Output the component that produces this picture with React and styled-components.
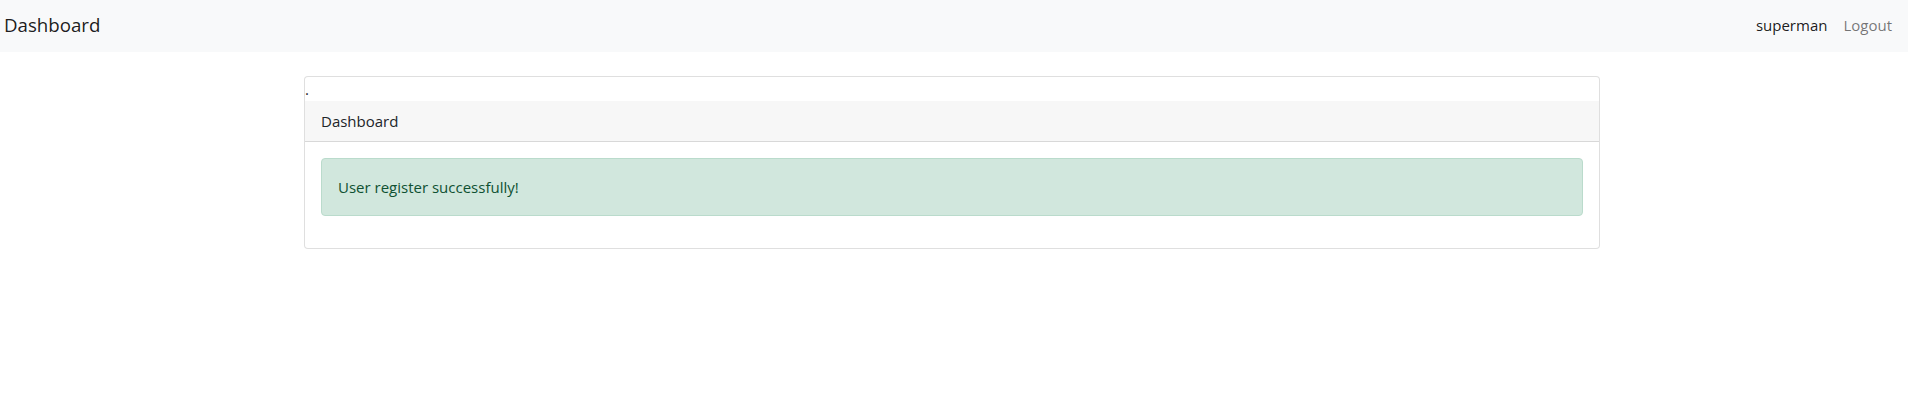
import React from 'react'
import styled, { createGlobalStyle } from 'styled-components'

const GlobalStyle = createGlobalStyle`
    body {
        margin: 0;
        font-family: "Open Sans", "Noto Sans", sans-serif;
        font-size: 15px;
        line-height: 24px;
        color: #212529;
        background: #fff;
    }
`

const Navbar = styled.nav`
    height: 52px;
    box-sizing: border-box;
    background: #f8f9fa;
    display: flex;
    align-items: center;
    justify-content: space-between;
    padding: 0 8px 2px 4px;
`
const Brand = styled.a`
    font-size: 18.7px;
    line-height: 30px;
    color: rgba(0, 0, 0, 0.9);
    text-decoration: none;
`
const NavLinks = styled.div`
    display: flex;
`
const NavLink = styled.a`
    padding: 0 8px;
    line-height: 24px;
    text-decoration: none;
    color: ${p => (p.$active ? 'rgba(0, 0, 0, 0.9)' : 'rgba(0, 0, 0, 0.55)')};
`
const Container = styled.div`
    max-width: 1296px;
    margin: 24px auto 0;
    position: relative;
    left: -2px;
`
const Card = styled.div`
    border: 1px solid rgba(0, 0, 0, 0.125);
    border-radius: 4px;
    background: #fff;
`
const Dot = styled.div`
    line-height: 24px;
`
const CardHeader = styled.div`
    padding: 8px 16px;
    background: rgba(0, 0, 0, 0.03);
    border-bottom: 1px solid rgba(0, 0, 0, 0.125);
`
const CardBody = styled.div`
    padding: 16px;
`
const Alert = styled.div`
    padding: 16px;
    margin-bottom: 16px;
    border: 1px solid #badbcc;
    border-radius: 4px;
    background: #d1e7dd;
    color: #0f5132;
`

const App = () => {
    return (
        <>
            <GlobalStyle />
            <Navbar>
                <Brand href="#">Dashboard</Brand>
                <NavLinks>
                    <NavLink href="#" $active>superman</NavLink>
                    <NavLink href="#">Logout</NavLink>
                </NavLinks>
            </Navbar>
            <Container>
                <Card>
                    <Dot>.</Dot>
                    <CardHeader>Dashboard</CardHeader>
                    <CardBody>
                        <Alert>User register successfully!</Alert>
                    </CardBody>
                </Card>
            </Container>
        </>
    )
}

export default App
